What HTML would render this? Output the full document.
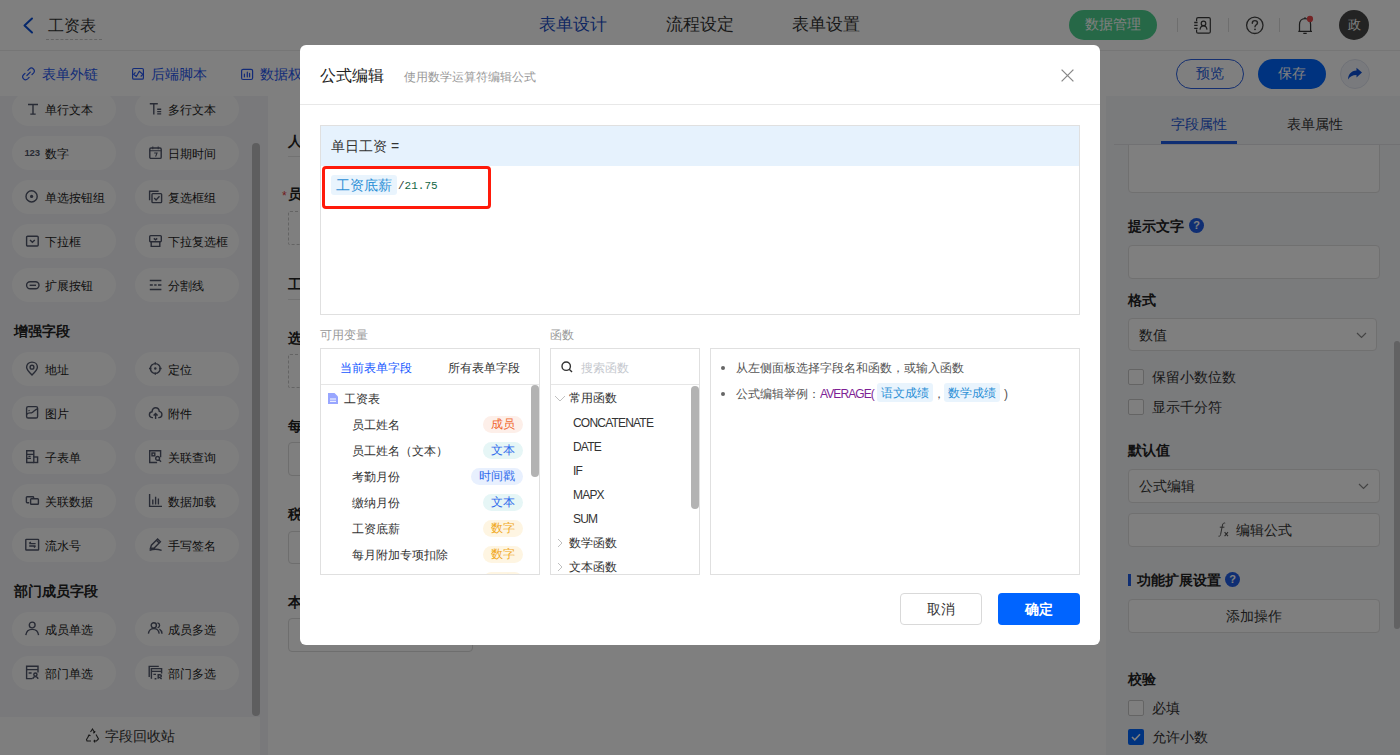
<!DOCTYPE html>
<html><head><meta charset="utf-8">
<style>
*{box-sizing:border-box;margin:0;padding:0}
html,body{width:1400px;height:755px;overflow:hidden;background:#fff;font-family:"Liberation Sans",sans-serif;color:#333}
.a{position:absolute}
.hdr{left:0;top:0;width:1400px;height:51px;background:#fff;border-bottom:1px solid #ececec}
.tb{left:0;top:51px;width:1400px;height:45px;background:#fff}
.lp{left:0;top:96px;width:268px;height:659px;background:#f2f3f6;overflow:hidden}
.pill{position:absolute;width:104px;height:34px;border-radius:17px;background:#fdfdfd;font-size:12.3px;line-height:34px;color:#222}
.pill svg{position:absolute;left:14px;top:10px}
.pill span{position:absolute;left:33px;top:0.5px}
.lh{position:absolute;left:14px;font-size:14px;font-weight:bold;color:#222;line-height:20px}
.cv{left:268px;top:96px;width:838px;height:659px;background:#fff}
.rp{left:1106px;top:96px;width:294px;height:659px;background:#f5f6f9}
.mask{left:0;top:0;width:1400px;height:755px;background:rgba(0,0,0,.5)}
.modal{left:300px;top:45px;width:800px;height:600px;background:#fff;border-radius:6px}
</style></head><body>
<div class="a hdr">
 <svg class="a" style="left:22px;top:17px" width="12" height="17" viewBox="0 0 12 17"><path d="M10 1.5 L2.5 8.5 L10 15.5" fill="none" stroke="#0a4fd6" stroke-width="2" stroke-linecap="round" stroke-linejoin="round"/></svg>
 <div class="a" style="left:48px;top:15px;font-size:16px;line-height:22px;color:#333">工资表</div>
 <div class="a" style="left:46px;top:39px;width:56px;border-top:1px dashed #c9c9c9"></div>
 <div class="a" style="left:539px;top:14px;font-size:17px;line-height:22px;color:#1d4fc4">表单设计</div>
 <div class="a" style="left:666px;top:14px;font-size:17px;line-height:22px;color:#333">流程设定</div>
 <div class="a" style="left:792px;top:14px;font-size:17px;line-height:22px;color:#333">表单设置</div>
 <div class="a" style="left:1069px;top:10px;width:88px;height:30px;border-radius:15px;background:#4cd18f;color:#fff;font-size:14px;line-height:29px;text-align:center">数据管理</div>
 <div class="a" style="left:1177px;top:18px;width:1px;height:14px;background:#ddd"></div>
 <svg class="a" style="left:1193px;top:16px" width="19" height="18" viewBox="0 0 19 18" fill="none" stroke="#3a3a3a" stroke-width="1.2"><path d="M3.6 13.6V15.7Q3.6 17.2 5.1 17.2H15.8Q17.3 17.2 17.3 15.7V3.1Q17.3 1.6 15.8 1.6H5.1Q3.6 1.6 3.6 3.1V5.3"/><path d="M1.2 6.5h3.4M1.2 9.4h3.4M1.2 12.4h3.4" stroke-width="1.3"/><circle cx="10.5" cy="7.4" r="2.3"/><path d="M7 13.6C7.3 11 8.7 9.8 10.5 9.8C12.3 9.8 13.7 11 14 13.6"/></svg>
 <div class="a" style="left:1228px;top:18px;width:1px;height:14px;background:#ddd"></div>
 <svg class="a" style="left:1245px;top:16px" width="20" height="19" viewBox="0 0 20 19"><circle cx="9.8" cy="9.3" r="8.2" fill="none" stroke="#444" stroke-width="1.3"/><path d="M7.3 7.2 C7.3 5.4 8.5 4.6 9.9 4.6 C11.4 4.6 12.5 5.6 12.5 6.9 C12.5 8.6 10 9 10 10.8" fill="none" stroke="#444" stroke-width="1.4" stroke-linecap="round"/><circle cx="10" cy="13.3" r="0.9" fill="#444"/></svg>
 <div class="a" style="left:1279px;top:18px;width:1px;height:14px;background:#ddd"></div>
 <svg class="a" style="left:1296px;top:15px" width="20" height="20" viewBox="0 0 20 20" fill="none" stroke="#383838" stroke-width="1.25"><path d="M2.3 16.3H16M3.5 16.3V9.6C3.5 6 5.8 3.7 9 3.7C12.2 3.7 14.6 6 14.6 9.6V16.3M7.3 18.4h3.4M9 2.2v1.5"/><circle cx="14" cy="3.9" r="3.1" fill="#e8484a" stroke="none"/></svg>
 <div class="a" style="left:1339px;top:10px;width:30px;height:30px;border-radius:15px;background:#474747;color:#fff;font-size:13px;line-height:30px;text-align:center">政</div>
</div>
<div class="a tb">
 <svg class="a" style="left:22px;top:16px" width="14" height="14" viewBox="0 0 14 14" fill="none" stroke="#2757f0" stroke-width="1.2" stroke-linecap="round"><path d="M5.9 3.4L7.35 1.95A2.9 2.9 0 0 1 11.45 6.05L10 7.5"/><path d="M7.1 10.4L5.65 11.85A2.9 2.9 0 0 1 1.55 7.75L3 6.3"/><path d="M4.9 8.5L8.3 5.1"/></svg>
 <div class="a" style="left:42px;top:13px;font-size:14px;line-height:20px;color:#2757f0">表单外链</div>
 <svg class="a" style="left:132px;top:16px" width="13" height="14" viewBox="0 0 13 14" fill="none" stroke="#2757f0" stroke-width="1.2" stroke-linejoin="round"><rect x="0.6" y="1.5" width="10.8" height="10.7" rx="1.3"/><path d="M3.5 5.3L1.6 7.4L4.3 9.5L7.3 4.2L10.9 7.4L8.7 9.5"/></svg>
 <div class="a" style="left:151px;top:13px;font-size:14px;line-height:20px;color:#2757f0">后端脚本</div>
 <svg class="a" style="left:241px;top:17px" width="13" height="13" viewBox="0 0 13 13" fill="none" stroke="#2757f0" stroke-width="1.2"><rect x="0.6" y="1.3" width="11" height="10.2" rx="1.5"/><path d="M3.4 8.8V6.1M6.3 8.8V4.2M8.6 8.8V5.4" stroke-linecap="round"/></svg>
 <div class="a" style="left:260px;top:13px;font-size:14px;line-height:20px;color:#2757f0">数据权限</div>
 <div class="a" style="left:1176px;top:8px;width:68px;height:30px;border-radius:15px;border:1.5px solid #2a5fe0;color:#2a5fe0;font-size:14px;line-height:27px;text-align:center">预览</div>
 <div class="a" style="left:1258px;top:8px;width:68px;height:30px;border-radius:15px;background:#0066ff;color:#fff;font-size:14px;line-height:29px;text-align:center">保存</div>
 <div class="a" style="left:1340px;top:8px;width:30px;height:30px;border-radius:15px;background:#f3f5fb;border:1px solid #dfe3ee"></div>
 <svg class="a" style="left:1347px;top:16px" width="16" height="14" viewBox="0 0 16 14"><path d="M15 5.5 L9.5 0.8 V3.5 C4 3.8 1.2 7.5 1 12.5 C2.8 9.5 5.5 8 9.5 8 V10.5 Z" fill="#0a4fd6"/></svg>
</div>
<div class="a lp">
<div class="pill" style="left:12px;top:-4px"><svg width="14" height="14" viewBox="0 0 14 14" fill="none" stroke="#50566a" stroke-width="1.4" style="overflow:visible"><path d="M2 2.5h10M7 2.5v9.6M4.3 12.1h5.4"/></svg><span>单行文本</span></div>
<div class="pill" style="left:135px;top:-4px"><svg width="14" height="14" viewBox="0 0 14 14" fill="none" stroke="#50566a" stroke-width="1.4" style="overflow:visible"><path d="M0.8 1.8h8M4.8 1.8v10.8M8.2 7.3h4M8.2 9.6h4M8.2 11.9h4"/></svg><span>多行文本</span></div>
<div class="pill" style="left:12px;top:40px"><svg width="16" height="14" viewBox="0 0 16 14" style="overflow:visible"><text x="-1.5" y="10" font-family="Liberation Sans" font-weight="bold" font-size="9.5" letter-spacing="-0.2" fill="#50566a">123</text></svg><span>数字</span></div>
<div class="pill" style="left:135px;top:40px"><svg width="14" height="14" viewBox="0 0 14 14" fill="none" stroke="#50566a" stroke-width="1.4" style="overflow:visible"><rect x="0.8" y="2" width="11.4" height="10.4" rx="1.2"/><path d="M0.8 4.8h11.4M3.8 0.6v2.6M9.2 0.6v2.6M5.2 7h2.8L6.6 10.6" stroke-width="1.1"/></svg><span>日期时间</span></div>
<div class="pill" style="left:12px;top:84px"><svg width="14" height="14" viewBox="0 0 14 14" fill="none" stroke="#50566a" stroke-width="1.4" style="overflow:visible"><circle cx="5.6" cy="6.4" r="5.6"/><circle cx="5.6" cy="6.4" r="1.6" fill="#50566a" stroke="none"/></svg><span>单选按钮组</span></div>
<div class="pill" style="left:135px;top:84px"><svg width="14" height="14" viewBox="0 0 14 14" fill="none" stroke="#50566a" stroke-width="1.4" style="overflow:visible"><path d="M0.6 10.2V1.2h9"/><rect x="3" y="3.6" width="9.6" height="9" rx="0.8"/><path d="M5.2 8l1.9 1.9 3.4-3.6"/></svg><span>复选框组</span></div>
<div class="pill" style="left:12px;top:128px"><svg width="14" height="14" viewBox="0 0 14 14" fill="none" stroke="#50566a" stroke-width="1.4" style="overflow:visible"><rect x="0.6" y="2.2" width="11.6" height="9.8" rx="1"/><path d="M4 6l2.4 2.3L8.8 6"/></svg><span>下拉框</span></div>
<div class="pill" style="left:135px;top:128px"><svg width="14" height="14" viewBox="0 0 14 14" fill="none" stroke="#50566a" stroke-width="1.4" style="overflow:visible"><rect x="0.7" y="1.6" width="11.6" height="6.2" rx="1"/><path d="M2.2 7.8v4.6h8.6V7.8M4.8 4.4l1.7 1.4 1.7-1.4"/></svg><span>下拉复选框</span></div>
<div class="pill" style="left:12px;top:172px"><svg width="14" height="14" viewBox="0 0 14 14" fill="none" stroke="#50566a" stroke-width="1.4" style="overflow:visible"><rect x="0.6" y="3.8" width="12.4" height="7" rx="3.5"/><path d="M3.6 7.3h6.4"/></svg><span>扩展按钮</span></div>
<div class="pill" style="left:135px;top:172px"><svg width="14" height="14" viewBox="0 0 14 14" fill="none" stroke="#50566a" stroke-width="1.4" style="overflow:visible"><path d="M0.8 2.5h11.6M0.8 7h3M5.2 7h2.4M9 7h3.4M0.8 11.5h11.6"/></svg><span>分割线</span></div>
<div class="lh" style="top:225px">增强字段</div>
<div class="pill" style="left:12px;top:256px"><svg width="14" height="14" viewBox="0 0 14 14" fill="none" stroke="#50566a" stroke-width="1.4" style="overflow:visible"><path d="M6 13.1C2.6 9.6 0.6 7.4 0.6 5.2C0.6 2.3 3 0.1 6 0.1C9 0.1 11.4 2.3 11.4 5.2C11.4 7.4 9.4 9.6 6 13.1Z"/><circle cx="6" cy="5.2" r="1.9"/></svg><span>地址</span></div>
<div class="pill" style="left:135px;top:256px"><svg width="14" height="14" viewBox="0 0 14 14" fill="none" stroke="#50566a" stroke-width="1.4" style="overflow:visible"><circle cx="6.3" cy="6.5" r="4.9"/><circle cx="6.3" cy="6.5" r="1.2" fill="#50566a" stroke="none"/><path d="M6.3 0.2v2.4M6.3 10.4v2.4M0 6.5h2.4M10.2 6.5h2.4"/></svg><span>定位</span></div>
<div class="pill" style="left:12px;top:300px"><svg width="14" height="14" viewBox="0 0 14 14" fill="none" stroke="#50566a" stroke-width="1.4" style="overflow:visible"><rect x="0.6" y="0.6" width="11" height="11.4" rx="1.6"/><path d="M0.8 8.2C2.8 5.8 4.6 7.8 6.6 6.2C8.4 4.8 9.6 3.4 11.4 2.8M2.6 4.2l0.9 0.9"/></svg><span>图片</span></div>
<div class="pill" style="left:135px;top:300px"><svg width="14" height="14" viewBox="0 0 14 14" fill="none" stroke="#50566a" stroke-width="1.4" style="overflow:visible"><path d="M4 11.6H3.3C1.7 11.6 0.4 10.3 0.4 8.7C0.4 7.2 1.5 6 3 5.8C3.3 3.5 4.8 1.8 6.6 1.8C8.6 1.8 10 3.3 10.3 5.4C11.8 5.6 12.9 6.9 12.9 8.5C12.9 10.2 11.6 11.6 10 11.6H9.2M6.6 13V7.8M4.6 9.6l2-2 2 2"/></svg><span>附件</span></div>
<div class="pill" style="left:12px;top:344px"><svg width="14" height="14" viewBox="0 0 14 14" fill="none" stroke="#50566a" stroke-width="1.4" style="overflow:visible"><path d="M7.8 7V0.7H0.7v11.8h7.1M0.7 4.4h6.9M0.7 8.4h4.3M2.4 6.4h2.2"/><rect x="7.8" y="7" width="3.8" height="5.5"/></svg><span>子表单</span></div>
<div class="pill" style="left:135px;top:344px"><svg width="14" height="14" viewBox="0 0 14 14" fill="none" stroke="#50566a" stroke-width="1.4" style="overflow:visible"><path d="M11.6 7.2V0.7H0.7v11.8h7.4"/><rect x="3" y="3" width="2.8" height="2.8"/><circle cx="8.6" cy="8.4" r="1.9"/><path d="M10 9.8l2 2"/></svg><span>关联查询</span></div>
<div class="pill" style="left:12px;top:388px"><svg width="14" height="14" viewBox="0 0 14 14" fill="none" stroke="#50566a" stroke-width="1.4" style="overflow:visible"><path d="M7.6 4.6V3.5Q7.6 2.8 6.9 2.8H1.1Q0.4 2.8 0.4 3.5V8.1Q0.4 8.8 1.1 8.8H3.2"/><rect x="4.6" y="4.8" width="7.8" height="5.4" rx="0.8"/></svg><span>关联数据</span></div>
<div class="pill" style="left:135px;top:388px"><svg width="14" height="14" viewBox="0 0 14 14" fill="none" stroke="#50566a" stroke-width="1.4" style="overflow:visible"><path d="M0.6 0v12.4H13M3.8 10.4V5.6M6.6 10.4V2.8M9.4 10.4V4.6"/></svg><span>数据加载</span></div>
<div class="pill" style="left:12px;top:432px"><svg width="14" height="14" viewBox="0 0 14 14" fill="none" stroke="#50566a" stroke-width="1.4" style="overflow:visible"><rect x="-0.2" y="1.4" width="12.8" height="10.6" rx="0.6"/><path d="M3.2 5.6h6.4M4.8 4.1L3.2 5.6M3.2 8h6.4M8 9.5l1.6-1.5"/></svg><span>流水号</span></div>
<div class="pill" style="left:135px;top:432px"><svg width="14" height="14" viewBox="0 0 14 14" fill="none" stroke="#50566a" stroke-width="1.4" style="overflow:visible"><path d="M1.4 10.4L2.4 7.2L8.6 1L11.4 3.8L5.2 10Z M7.4 2.2L10.2 5M0.6 12.4C3.5 11.2 8.5 11 12.6 12.4"/></svg><span>手写签名</span></div>
<div class="lh" style="top:485px">部门成员字段</div>
<div class="pill" style="left:12px;top:516px"><svg width="14" height="14" viewBox="0 0 14 14" fill="none" stroke="#50566a" stroke-width="1.4" style="overflow:visible"><circle cx="6.2" cy="3" r="2.9"/><path d="M-0.2 13.2C0.3 9.4 2.8 7.4 6.2 7.4C9.6 7.4 12.1 9.4 12.6 13.2"/></svg><span>成员单选</span></div>
<div class="pill" style="left:135px;top:516px"><svg width="14" height="14" viewBox="0 0 14 14" fill="none" stroke="#50566a" stroke-width="1.4" style="overflow:visible"><circle cx="4.8" cy="3.3" r="2.6"/><path d="M-0.6 11.7C-0.2 8.4 1.8 6.6 4.8 6.6C7.8 6.6 9.8 8.4 10.2 11.7M8.4 0.9C9.9 1.2 10.6 2.2 10.6 3.3C10.6 4.5 9.9 5.4 8.6 5.8M10.4 7.2C11.8 8 12.8 9.6 13 11.7"/></svg><span>成员多选</span></div>
<div class="pill" style="left:12px;top:560px"><svg width="14" height="14" viewBox="0 0 14 14" fill="none" stroke="#50566a" stroke-width="1.4" style="overflow:visible"><path d="M6.4 12.6H0.6V0.3h11.4v6.2M0.6 3.6h11.4M2.6 7h3"/><circle cx="9.4" cy="8.6" r="1.6"/><path d="M6.8 12.8C7.1 11.2 8.1 10.6 9.4 10.6C10.7 10.6 11.7 11.2 12 12.8"/></svg><span>部门单选</span></div>
<div class="pill" style="left:135px;top:560px"><svg width="14" height="14" viewBox="0 0 14 14" fill="none" stroke="#50566a" stroke-width="1.4" style="overflow:visible"><path d="M0.2 11V0.4h9.6M2.4 12.8V2.6h10.2v5M2.4 5.4h10.2M4.4 8.4h2.6"/><path d="M5.6 12.8h1.8M9.2 12.8V8.8h1.6C11.8 8.8 12.4 9.4 12.4 10.1C12.4 10.9 11.8 11.4 10.8 11.4H9.2M10.8 11.4L12.6 13"/></svg><span>部门多选</span></div>
<div class="a" style="left:252px;top:47px;width:8px;height:573px;border-radius:4px;background:#bdbdbf"></div>
<div class="a" style="left:0;top:621px;width:260px;height:38px;background:#fdfdfd"><svg class="a" style="left:85px;top:11px" width="15" height="15" viewBox="0 0 15 15" fill="none" stroke="#333" stroke-width="1.1"><path d="M5.5 4L7.5 1L9.5 4.5M11 6.5L13.5 11L11.5 13H9M6 13H2L1.5 11.5L4 7.5M3 8.5l1-1.5 1.5 0.8M8 5l1.5-0.5L10 3M10 12l-1 1 1 1.5"/></svg><div class="a" style="left:105px;top:9px;font-size:14px;line-height:20px;color:#333">字段回收站</div></div>
</div>
<div class="a cv">
 <div class="a" style="left:20px;top:35px;font-size:14px;font-weight:bold;line-height:20px;color:#222">人员信息</div>
 <div class="a" style="left:20px;top:60px;width:790px;height:1px;background:#e4e4e4"></div>
 <div class="a" style="left:14px;top:90px;font-size:12px;line-height:20px;color:#e4393c">*</div>
 <div class="a" style="left:20px;top:88px;font-size:14px;font-weight:bold;line-height:20px;color:#222">员工姓名</div>
 <div class="a" style="left:20px;top:115px;width:790px;height:34px;border:1px dashed #c8c8c8;border-radius:2px"></div>
 <div class="a" style="left:20px;top:178px;font-size:14px;font-weight:bold;line-height:20px;color:#222">工资信息</div>
 <div class="a" style="left:20px;top:203px;width:790px;height:1px;background:#e4e4e4"></div>
 <div class="a" style="left:20px;top:232px;font-size:14px;font-weight:bold;line-height:20px;color:#222">选择月份</div>
 <div class="a" style="left:20px;top:258px;width:790px;height:34px;border:1px dashed #c8c8c8;border-radius:2px"></div>
 <div class="a" style="left:20px;top:320px;font-size:14px;font-weight:bold;line-height:20px;color:#222">每月附加专项扣除</div>
 <div class="a" style="left:20px;top:346px;width:185px;height:34px;border:1px solid #dcdcdc;border-radius:4px"></div>
 <div class="a" style="left:20px;top:408px;font-size:14px;font-weight:bold;line-height:20px;color:#222">税前工资</div>
 <div class="a" style="left:20px;top:435px;width:185px;height:33px;border:1px solid #dcdcdc;border-radius:4px"></div>
 <div class="a" style="left:20px;top:496px;font-size:14px;font-weight:bold;line-height:20px;color:#222">本月工资</div>
 <div class="a" style="left:20px;top:522px;width:185px;height:34px;border:1px solid #dcdcdc;border-radius:4px"></div>
</div>
<div class="a rp">
 <div class="a" style="left:22px;top:4px;width:252px;height:92.5px;border:1px solid #e0e0e0;border-radius:4px;background:#fff"></div>
 <div class="a" style="left:0;top:0;width:294px;height:48px;background:#f5f6f9"></div>
 <div class="a" style="left:65px;top:18px;font-size:14px;line-height:20px;color:#2357d6">字段属性</div>
 <div class="a" style="left:181px;top:18px;font-size:14px;line-height:20px;color:#333">表单属性</div>
 <div class="a" style="left:8px;top:48px;width:286px;height:1px;background:#e2e3e6"></div>
 <div class="a" style="left:55px;top:45px;width:76px;height:3px;background:#1f5ce6"></div>
 <div class="a" style="left:22px;top:120px;font-size:14px;font-weight:bold;line-height:20px;color:#222">提示文字</div>
 <div class="a" style="left:83px;top:122px;width:15px;height:15px;border-radius:8px;background:#1f5ce6;color:#fff;font-size:11px;font-weight:bold;line-height:15px;text-align:center">?</div>
 <div class="a" style="left:22px;top:149px;width:252px;height:34px;border:1px solid #e0e0e0;border-radius:4px;background:#fff"></div>
 <div class="a" style="left:22px;top:194px;font-size:14px;font-weight:bold;line-height:20px;color:#222">格式</div>
 <div class="a" style="left:22px;top:222px;width:249px;height:33px;border:1px solid #e0e0e0;border-radius:4px;background:#fff"></div>
 <div class="a" style="left:33px;top:229px;font-size:14px;line-height:20px;color:#333">数值</div>
 <svg class="a" style="left:250px;top:236px" width="11" height="7" viewBox="0 0 11 7"><path d="M1 1l4.5 4.5L10 1" fill="none" stroke="#888" stroke-width="1.2"/></svg>
 <div class="a" style="left:22px;top:273px;width:16px;height:16px;border:1px solid #c9c9c9;border-radius:2px;background:#fff"></div>
 <div class="a" style="left:46px;top:271px;font-size:14px;line-height:20px;color:#333">保留小数位数</div>
 <div class="a" style="left:22px;top:303px;width:16px;height:16px;border:1px solid #c9c9c9;border-radius:2px;background:#fff"></div>
 <div class="a" style="left:46px;top:301px;font-size:14px;line-height:20px;color:#333">显示千分符</div>
 <div class="a" style="left:22px;top:344px;font-size:14px;font-weight:bold;line-height:20px;color:#222">默认值</div>
 <div class="a" style="left:22px;top:373px;width:252px;height:34px;border:1px solid #e0e0e0;border-radius:4px;background:#fff"></div>
 <div class="a" style="left:33px;top:380px;font-size:14px;line-height:20px;color:#333">公式编辑</div>
 <svg class="a" style="left:252px;top:387px" width="11" height="7" viewBox="0 0 11 7"><path d="M1 1l4.5 4.5L10 1" fill="none" stroke="#888" stroke-width="1.2"/></svg>
 <div class="a" style="left:22px;top:417px;width:252px;height:34px;border:1px solid #e0e0e0;border-radius:4px;background:#fff"></div>
 <svg class="a" style="left:112px;top:426px" width="13" height="15" viewBox="0 0 13 15" fill="none" stroke="#555" stroke-width="1"><path d="M7.2 1.2C6 0.6 4.9 1.2 4.5 3L2.6 12.5C2.2 14.2 1.3 14.6 0.5 14.2M1.8 5.2h4.6"/><path d="M6.6 10.2l3.4 4M10 10.2l-3.4 4" stroke-width="1.1"/></svg>
 <div class="a" style="left:130px;top:424px;font-size:14px;line-height:20px;color:#333">编辑公式</div>
 <div class="a" style="left:22px;top:478px;width:3px;height:12px;background:#1f5ce6"></div>
 <div class="a" style="left:31px;top:474px;font-size:14px;font-weight:bold;line-height:20px;color:#222">功能扩展设置</div>
 <div class="a" style="left:119px;top:476px;width:15px;height:15px;border-radius:8px;background:#1f5ce6;color:#fff;font-size:11px;font-weight:bold;line-height:15px;text-align:center">?</div>
 <div class="a" style="left:22px;top:503px;width:252px;height:34px;border:1px solid #e0e0e0;border-radius:4px;background:#fff"></div>
 <div class="a" style="left:120px;top:510px;font-size:14px;line-height:20px;color:#333">添加操作</div>
 <div class="a" style="left:22px;top:573px;font-size:14px;font-weight:bold;line-height:20px;color:#222">校验</div>
 <div class="a" style="left:22px;top:604px;width:16px;height:16px;border:1px solid #c9c9c9;border-radius:2px;background:#fff"></div>
 <div class="a" style="left:46px;top:602px;font-size:14px;line-height:20px;color:#333">必填</div>
 <div class="a" style="left:22px;top:633px;width:16px;height:16px;border-radius:2px;background:#0066ff"><svg class="a" style="left:3px;top:4px" width="10" height="8" viewBox="0 0 10 8"><path d="M1 4l2.8 2.8L9 1.2" fill="none" stroke="#fff" stroke-width="1.6"/></svg></div>
 <div class="a" style="left:46px;top:631px;font-size:14px;line-height:20px;color:#333">允许小数</div>
 <div class="a" style="left:288px;top:245px;width:6px;height:288px;border-radius:3px;background:#c4c4c6"></div>
</div>
<div class="a mask"></div>
<div class="a modal">
 <div class="a" style="left:20px;top:20px;font-size:16px;line-height:22px;color:#222">公式编辑</div>
 <div class="a" style="left:104px;top:22px;font-size:12px;line-height:20px;color:#999">使用数学运算符编辑公式</div>
 <svg class="a" style="left:761px;top:24px" width="13" height="13" viewBox="0 0 13 13"><path d="M0.6 0.6l11.8 11.8M12.4 0.6L0.6 12.4" stroke="#888" stroke-width="1.3"/></svg>
 <div class="a" style="left:0;top:59px;width:800px;height:1px;background:#e8e8e8"></div>
 <div class="a" style="left:20px;top:80px;width:760px;height:190px;border:1px solid #e0e0e0">
  <div class="a" style="left:0;top:0;width:758px;height:40px;background:#e6f2fd"></div>
  <div class="a" style="left:10px;top:10px;font-size:14px;line-height:20px;color:#333">单日工资 =</div>
 </div>
 <div class="a" style="left:22px;top:121px;width:169px;height:43px;border:3px solid #ff1a0a;border-radius:4px"></div>
 <div class="a" style="left:31px;top:130px;width:66px;height:20px;border-radius:3px;background:#e9f4fd;color:#2b8fd6;font-size:14px;line-height:21px;text-align:center">工资底薪</div>
 <div class="a" style="left:98px;top:133px;font-family:'Liberation Mono',monospace;font-size:11px;line-height:16px;color:#164"><span style="color:#333">/</span>21.75</div>
 <div class="a" style="left:20px;top:280px;font-size:12px;line-height:20px;color:#999">可用变量</div>
 <div class="a" style="left:250px;top:280px;font-size:12px;line-height:20px;color:#999">函数</div>
 <div class="a" style="left:20px;top:303px;width:220px;height:227px;border:1px solid #e0e0e0;overflow:hidden;background:#fff">
  <div class="a" style="left:19px;top:8.5px;font-size:12px;line-height:20px;color:#1658ff">当前表单字段</div>
  <div class="a" style="left:127px;top:9px;font-size:12px;line-height:20px;color:#333">所有表单字段</div>
  <div class="a" style="left:0;top:35px;width:220px;height:1px;background:#e6e6e6"></div>
  <svg class="a" style="left:7px;top:44px" width="10" height="11" viewBox="0 0 10 11"><path d="M0 0h6.5L10 3.5V11H0Z" fill="#98a6ff"/><path d="M2 6h6M2 8.3h6" stroke="#fff" stroke-width="1"/></svg>
  <div class="a" style="left:23px;top:39.5px;font-size:12px;line-height:20px;color:#333">工资表</div>
<div class="a" style="left:31px;top:65.5px;font-size:12px;line-height:20px;color:#333;white-space:nowrap">员工姓名</div>
<div class="a" style="left:162px;top:67px;width:40px;height:17px;border-radius:9px;background:#fdefe9;color:#f0672e;font-size:12px;line-height:17px;text-align:center">成员</div>
<div class="a" style="left:31px;top:91.5px;font-size:12px;line-height:20px;color:#333;white-space:nowrap">员工姓名（文本）</div>
<div class="a" style="left:162px;top:93px;width:40px;height:17px;border-radius:9px;background:#e6f6f6;color:#2f6bec;font-size:12px;line-height:17px;text-align:center">文本</div>
<div class="a" style="left:31px;top:117.5px;font-size:12px;line-height:20px;color:#333;white-space:nowrap">考勤月份</div>
<div class="a" style="left:150px;top:119px;width:52px;height:17px;border-radius:9px;background:#e8f0fe;color:#2f6bec;font-size:12px;line-height:17px;text-align:center">时间戳</div>
<div class="a" style="left:31px;top:143.5px;font-size:12px;line-height:20px;color:#333;white-space:nowrap">缴纳月份</div>
<div class="a" style="left:162px;top:145px;width:40px;height:17px;border-radius:9px;background:#e6f6f6;color:#2f6bec;font-size:12px;line-height:17px;text-align:center">文本</div>
<div class="a" style="left:31px;top:169.5px;font-size:12px;line-height:20px;color:#333;white-space:nowrap">工资底薪</div>
<div class="a" style="left:162px;top:171px;width:40px;height:17px;border-radius:9px;background:#fef5e2;color:#f0a81c;font-size:12px;line-height:17px;text-align:center">数字</div>
<div class="a" style="left:31px;top:195.5px;font-size:12px;line-height:20px;color:#333;white-space:nowrap">每月附加专项扣除</div>
<div class="a" style="left:162px;top:197px;width:40px;height:17px;border-radius:9px;background:#fef5e2;color:#f0a81c;font-size:12px;line-height:17px;text-align:center">数字</div>
<div class="a" style="left:31px;top:221.5px;font-size:12px;line-height:20px;color:#333;white-space:nowrap"></div>
<div class="a" style="left:162px;top:223px;width:40px;height:17px;border-radius:9px;background:#fef5e2;color:#f0a81c;font-size:12px;line-height:17px;text-align:center">数字</div>
  <div class="a" style="left:210px;top:36px;width:8px;height:92px;border-radius:4px;background:#b3b3b3"></div>
  
 </div>
 <div class="a" style="left:250px;top:303px;width:150px;height:227px;border:1px solid #e0e0e0;overflow:hidden;background:#fff">
  <svg class="a" style="left:10px;top:12px" width="12" height="12" viewBox="0 0 12 12"><circle cx="5.2" cy="5.2" r="4.2" fill="none" stroke="#333" stroke-width="1.4"/><path d="M8.2 8.2l2.8 2.8" stroke="#333" stroke-width="1.4"/></svg>
  <div class="a" style="left:30px;top:9px;font-size:12px;line-height:20px;color:#c5c8ce">搜索函数</div>
<svg class="a" style="left:3px;top:46px" width="12" height="7" viewBox="0 0 12 7"><path d="M1 1l5 5 5-5" fill="none" stroke="#c0c0c0" stroke-width="1"/></svg>
<div class="a" style="left:18px;top:39px;font-size:12px;line-height:20px;color:#333">常用函数</div>
<div class="a" style="left:22px;top:63.5px;font-size:12px;line-height:20px;color:#333;letter-spacing:-0.8px">CONCATENATE</div>
<div class="a" style="left:22px;top:87.5px;font-size:12px;line-height:20px;color:#333;letter-spacing:-0.8px">DATE</div>
<div class="a" style="left:22px;top:111.5px;font-size:12px;line-height:20px;color:#333;letter-spacing:-0.8px">IF</div>
<div class="a" style="left:22px;top:135.5px;font-size:12px;line-height:20px;color:#333;letter-spacing:-0.8px">MAPX</div>
<div class="a" style="left:22px;top:159.5px;font-size:12px;line-height:20px;color:#333;letter-spacing:-0.8px">SUM</div>
<svg class="a" style="left:6px;top:188.5px" width="6" height="10" viewBox="0 0 6 10"><path d="M1 1l4 4-4 4" fill="none" stroke="#c0c0c0" stroke-width="1"/></svg>
<div class="a" style="left:18px;top:183.5px;font-size:12px;line-height:20px;color:#333">数学函数</div>
<svg class="a" style="left:6px;top:212.5px" width="6" height="10" viewBox="0 0 6 10"><path d="M1 1l4 4-4 4" fill="none" stroke="#c0c0c0" stroke-width="1"/></svg>
<div class="a" style="left:18px;top:207.5px;font-size:12px;line-height:20px;color:#333">文本函数</div>
  <div class="a" style="left:140px;top:37px;width:8px;height:123px;border-radius:4px;background:#b3b3b3"></div>
  <div class="a" style="left:0;top:35px;width:150px;height:1px;background:#e6e6e6"></div>
 </div>
 <div class="a" style="left:410px;top:303px;width:370px;height:227px;border:1px solid #e0e0e0;background:#fff">
  <div class="a" style="left:10px;top:17px;width:4px;height:4px;border-radius:2px;background:#666"></div>
  <div class="a" style="left:25px;top:9px;font-size:12px;line-height:20px;color:#555">从左侧面板选择字段名和函数，或输入函数</div>
  <div class="a" style="left:10px;top:43px;width:4px;height:4px;border-radius:2px;background:#666"></div>
  <div class="a" style="left:25px;top:35px;font-size:12px;line-height:20px;color:#555;white-space:nowrap">公式编辑举例：<span style="color:#7e1f95;letter-spacing:-0.9px">AVERAGE(</span></div>
  <div class="a" style="left:166px;top:34px;width:56px;height:19px;border-radius:3px;background:#e9f4fd;color:#2b8fd6;font-size:12px;line-height:21px;text-align:center">语文成绩</div>
  <div class="a" style="left:222px;top:35px;font-size:12px;line-height:20px;color:#555">，</div>
  <div class="a" style="left:233px;top:34px;width:56px;height:19px;border-radius:3px;background:#e9f4fd;color:#2b8fd6;font-size:12px;line-height:21px;text-align:center">数学成绩</div>
  <div class="a" style="left:293px;top:35px;font-size:12px;line-height:20px;color:#555">)</div>
 </div>
 <div class="a" style="left:600px;top:548px;width:82px;height:32px;border:1px solid #d9d9d9;border-radius:4px;color:#333;font-size:14px;line-height:30px;text-align:center">取消</div>
 <div class="a" style="left:698px;top:548px;width:82px;height:32px;border-radius:4px;background:#0064ff;color:#fff;font-size:14px;font-weight:bold;line-height:32px;text-align:center">确定</div>
</div>
</body></html>
